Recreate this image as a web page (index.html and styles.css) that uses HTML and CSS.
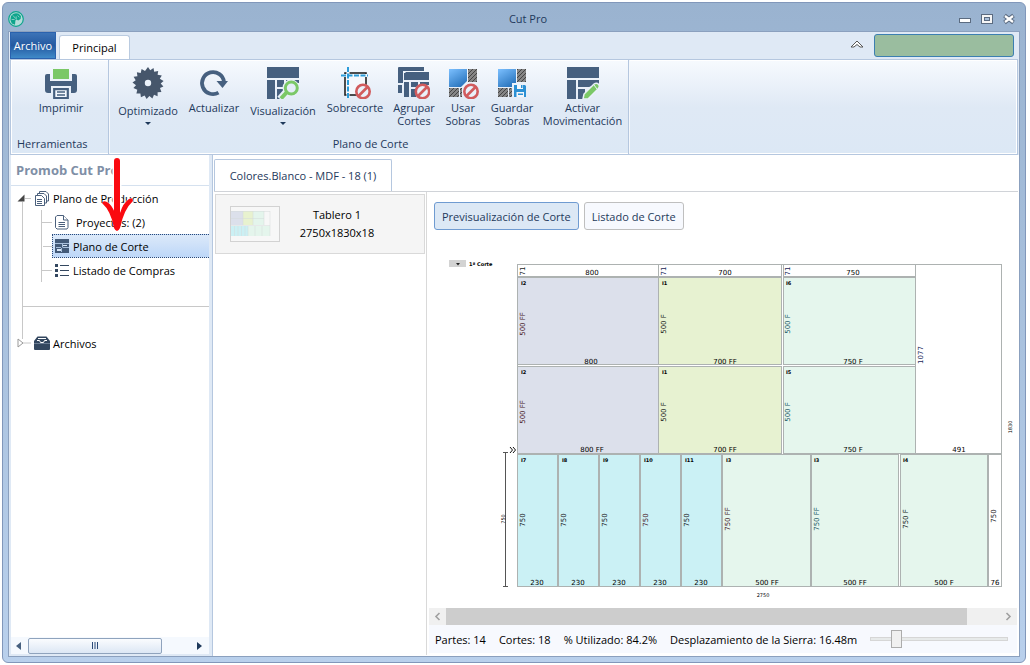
FILE: index.html
```
<!DOCTYPE html>
<html lang="es">
<head>
    <meta charset="UTF-8">
    <meta name="viewport" content="width=device-width, initial-scale=1.0">
    <title>Cut Pro</title>
    <link rel="stylesheet" href="styles.css">
</head>
<body>
    <div class="window">
        <header class="titlebar">
            <svg class="logo" width="16" height="16" viewBox="0 0 16 16">
                <circle cx="8" cy="8" r="7.3" fill="#b5dcda" stroke="#0fa58c" stroke-width="1.2"/>
                <path d="M8 2.2L10.5 2.6L13 5L12.6 8L10.2 9.4L8.6 8.4L7.4 9.6L7 13.8L3.8 12.4L2.4 9L3 5L5.4 2.8Z" fill="#0fa58c"/>
                <path d="M8.2 5.4v3M5 4.5l2.6 3M3.6 8.5h3M9.6 4.6l1.8 1.6" stroke="#b5dcda" stroke-width=".7" fill="none"/>
            </svg>
            <h1 class="title">Cut Pro</h1>
            <div class="window-buttons">
                <button type="button" aria-label="Minimizar">
                    <svg width="14" height="12" viewBox="0 0 14 12"><rect x="1.5" y="5.5" width="11" height="4" fill="#fff" stroke="#5b6b80"/></svg>
                </button>
                <button type="button" aria-label="Maximizar">
                    <svg width="14" height="12" viewBox="0 0 14 12"><rect x="1.5" y="1.5" width="11" height="9" fill="#f6f6f6" stroke="#5b6b80"/><rect x="4.500" y="4.500" width="5" height="3" fill="#a9bfda" stroke="#5b6b80"/></svg>
                </button>
                <button type="button" aria-label="Cerrar">
                    <svg width="14" height="12" viewBox="0 0 14 12"><path d="M2.500 2.500L11.500 9.500M11.500 2.500L2.500 9.500" stroke="#5b6b80" stroke-width="4.200"/><path d="M3 3L11 9M11 3L3 9" stroke="#fff" stroke-width="2.200"/></svg>
                </button>
            </div>
        </header>

        <div class="frame">
            <nav class="tabs">
                <button type="button" class="tab-file">Archivo</button>
                <button type="button" class="tab-main">Principal</button>
                <button type="button" class="collapse" aria-label="Contraer cinta">
                    <svg width="14" height="8" viewBox="0 0 14 8"><path d="M1 7L7 1L13 7H10L7 4.500L4 7Z" fill="#fff" stroke="#555" stroke-width="1"/></svg>
                </button>
                <input type="text" class="search" aria-label="Buscar">
            </nav>

            <div class="ribbon">
                <section class="group group-tools">
                    <div class="tools">
                        <button type="button" class="tool">
                            <svg width="32" height="32" viewBox="0 0 32 32">
                                <rect x="8" y="2" width="16" height="10" fill="#7bc867"/>
                                <path d="M0 9Q0 7 2 7H5V14H27V7H30Q32 7 32 9V23Q32 26 29 26H26V19H6V26H3Q0 26 0 23Z" fill="#46607f"/>
                                <path d="M9.200 22.200H22.800V31H9.200Z" fill="#f4f8fd" stroke="#46607f" stroke-width="2.200"/>
                                <path d="M12 25H20M12 28H20" stroke="#46607f" stroke-width="1.400"/>
                            </svg>
                            <span>Imprimir</span>
                        </button>
                    </div>
                    <h2>Herramientas</h2>
                </section>
                <section class="group group-plan">
                    <div class="tools">
                        <button type="button" class="tool tool-menu w-70">
                            <svg width="32" height="32" viewBox="0 0 32 32">
                                <path fill="#46566b" fill-rule="evenodd" d="M16 0L18.200 3.200L21.500 1L22.200 4.800L26.200 4L25.600 7.800L29.800 8.600L27.800 11.800L31.600 14L28.700 16.400L31.400 19.600L28 21L29.400 25L25.600 25.200L25.600 29.200L22 27.800L20.400 31.500L17.400 29L14.600 32L12.600 28.600L8.900 30.200L8.400 26.400L4.400 26.500L5.300 22.700L1.400 21L4 18.200L.5 15.500L3.700 13.300L1.600 9.800L5.400 9.200L4.900 5.200L8.700 6L9.600 2L13 3.900Z M16 12.800A3.200 3.200 0 1 0 16 19.200A3.200 3.200 0 1 0 16 12.800Z"/>
                            </svg>
                            <span>Optimizado</span>
                        </button>
                        <button type="button" class="tool w-62">
                            <svg width="32" height="32" viewBox="0 0 32 32">
                                <path d="M20.500 25.700A11 11 0 1 1 26 15" fill="none" stroke="#46607f" stroke-width="3.800"/>
                                <path d="M18.500 14H30L24.500 21Z" fill="#46607f"/>
                            </svg>
                            <span>Actualizar</span>
                        </button>
                        <button type="button" class="tool tool-menu w-76">
                            <svg width="32" height="32" viewBox="0 0 32 32">
                                <path d="M0 0H32V11H0ZM0 13H8V32H0ZM10 13H17V20H10ZM19 13H32V16H19ZM10 22H17V32H10Z" fill="#46607f"/>
                                <path d="M20 24L13 32" stroke="#e8f0fa" stroke-width="7"/>
                                <circle cx="24" cy="21" r="6" fill="#f1f6fc" stroke="#e8f0fa" stroke-width="5"/>
                                <path d="M20 25L14 31.500" stroke="#7bc867" stroke-width="4"/>
                                <circle cx="24.300" cy="21" r="6" fill="#e4edf8" stroke="#7bc867" stroke-width="3"/>
                            </svg>
                            <span>Visualización</span>
                        </button>
                        <button type="button" class="tool w-68">
                            <svg width="32" height="32" viewBox="0 0 32 32">
                                <rect x="6" y="6" width="21" height="22" fill="#f4f8fd" stroke="#222" stroke-width="1.600"/>
                                <path d="M9 0V31M2 8.500H29" fill="none" stroke="#f4f8fd" stroke-width="3"/>
                                <path d="M9 0V31M2 8.500H29" fill="none" stroke="#2b9bd8" stroke-width="2" stroke-dasharray="5 1.500"/>
                                <circle cx="24" cy="24.500" r="7.500" fill="#eaf1fa"/>
                                <g fill="none" stroke="#d15b5d" stroke-width="2.600"><circle cx="24" cy="24.500" r="6.700"/><path d="M28.500 20L19.500 29"/></g>
                            </svg>
                            <span>Sobrecorte</span>
                        </button>
                        <button type="button" class="tool w-50">
                            <svg width="32" height="32" viewBox="0 0 32 32">
                                <path d="M0 1Q0 0 1 0H26V4H5V16H0ZM0 18H4V26H0ZM6 6H7L8 5H31V13H6ZM6 15H11V30H6ZM13 15H20V20H13ZM22 15H31V18H22ZM13 22H18V30H13Z" fill="#46607f"/>
                                <circle cx="24.500" cy="24.500" r="7.500" fill="#eaf1fa"/>
                                <g fill="none" stroke="#d15b5d" stroke-width="2.600"><circle cx="24.500" cy="24.500" r="6.700"/><path d="M29 20L20 29"/></g>
                            </svg>
                            <span>Agrupar<br>Cortes</span>
                        </button>
                        <button type="button" class="tool w-48">
                            <svg width="32" height="32" viewBox="0 0 32 32">
                                <defs>
                                    <linearGradient id="board" x1="0" y1="0" x2=".6" y2="1"><stop offset="0" stop-color="#7cc0ff"/><stop offset="1" stop-color="#2b76bf"/></linearGradient>
                                    <pattern id="hatch" width="4" height="4" patternUnits="userSpaceOnUse"><rect width="4" height="4" fill="#858585"/><path d="M-1 1L1 -1M0 4L4 0M3 5L5 3" stroke="#444" stroke-width="1"/></pattern>
                                </defs>
                                <path d="M2 2H20V14L14 20H2Z" fill="url(#board)"/>
                                <path d="M21 2H30V15H21ZM2 21H12V30H2ZM13 21H15V30H13Z" fill="url(#hatch)"/>
                                <circle cx="24" cy="24.500" r="7.500" fill="#eaf1fa"/>
                                <g fill="none" stroke="#d15b5d" stroke-width="2.600"><circle cx="24" cy="24.500" r="6.700"/><path d="M28.500 20L19.500 29"/></g>
                            </svg>
                            <span>Usar<br>Sobras</span>
                        </button>
                        <button type="button" class="tool w-50">
                            <svg width="32" height="32" viewBox="0 0 32 32">
                                <path d="M2 2H20V16H16V20H2Z" fill="url(#board)"/>
                                <path d="M21 2H30V15H21ZM2 21H12V30H2ZM13 21H16V30H13Z" fill="url(#hatch)"/>
                                <path d="M18 18H29L30 19V30H18Z" fill="#2b90d4"/>
                                <path d="M21 18H27V22H21ZM20.500 25H28V30H20.500Z" fill="#f3f6fa"/>
                                <path d="M25 18H26.500V21H25ZM22 26.500H27V28H22Z" fill="#2b90d4"/>
                            </svg>
                            <span>Guardar<br>Sobras</span>
                        </button>
                        <button type="button" class="tool w-91">
                            <svg width="32" height="32" viewBox="0 0 32 32">
                                <path d="M0 0H32V11H0ZM0 13H9V32H0ZM11 13H32V17L22 20H11ZM11 22H18V32H11Z" fill="#46607f"/>
                                <path d="M16 32L17 27L27 17Q30 15 32 18Q33 20 31 22L21 32Z" fill="#7bc867" stroke="#eaf1fa" stroke-width="1.500"/>
                                <path d="M27 18L30 22" stroke="#eaf1fa" stroke-width="1"/>
                            </svg>
                            <span>Activar<br>Movimentación</span>
                        </button>
                    </div>
                    <h2>Plano de Corte</h2>
                </section>
            </div>

            <div class="workspace">
                <aside class="sidebar">
                    <h2 class="sidebar-title">Promob Cut Pro</h2>
                    <div class="tree">
                        <ul class="tree-root">
                            <li class="branch branch-open">
                                <div class="node">
                                    <svg class="toggle" width="14" height="10" viewBox="0 0 14 10"><path d="M8 5.500H14" stroke="#c8c8c8"/><path d="M7.500 1.500V8.500H.5Z" fill="#444"/></svg>
                                    <svg width="16" height="16" viewBox="0 0 16 16" fill="#fff" stroke="#4b607c">
                                        <path d="M5.500 3V1.500H12L14.500 4V11H12.500"/><path d="M3.500 5V3.500H10L12.500 6V13H10.500"/><path d="M1.500 5.500H7.500L10.500 8.500V15.500H1.500Z"/><path d="M3 9.500H8M3 11.500H8M3 13.500H8"/>
                                    </svg>
                                    <span>Plano de Producción</span>
                                </div>
                                <ul class="tree-sub">
                                    <li class="node node-wide">
                                        <svg width="16" height="16" viewBox="0 0 16 16" fill="#fff" stroke="#4b607c">
                                            <path d="M3 1.500H9.500L14 6V13.500L13 15H3L1.500 13.500V3Z"/><path d="M9.500 1.500V6H14M4.500 8.500H11M4.500 10.500H11M4.500 12.500H11"/>
                                        </svg>
                                        <span>Proyectos: (2)</span>
                                    </li>
                                    <li class="node node-selected">
                                        <svg width="16" height="16" viewBox="0 0 16 16">
                                            <path d="M1 1H15V15H1Z" fill="#435a78"/><path d="M1 5.500H15M8.500 6V9.500M9 9.500H15M2 9.500H7M7.500 10V14" fill="none" stroke="#a9c0dc"/><path d="M3 11H7V13H3ZM9 7H13V8H9Z" fill="#d8e6f7"/>
                                        </svg>
                                        <span>Plano de Corte</span>
                                    </li>
                                    <li class="node">
                                        <svg width="16" height="16" viewBox="0 0 16 16">
                                            <path d="M1 2H4V5H1ZM1 7H4V10H1ZM1 12H4V15H1Z" fill="#33475f"/><path d="M6 3.500H15M6 8.500H15M6 13.500H15" stroke="#33475f"/>
                                        </svg>
                                        <span>Listado de Compras</span>
                                    </li>
                                </ul>
                            </li>
                            <li class="tree-rule"></li>
                            <li class="branch branch-last">
                                <div class="node">
                                    <svg class="toggle" width="14" height="10" viewBox="0 0 14 10"><path d="M6 5H14" stroke="#c8c8c8"/><path d="M1 1L6 5L1 9Z" fill="#fff" stroke="#999"/></svg>
                                    <svg width="16" height="16" viewBox="0 0 16 16">
                                        <path d="M3.500 1.500H12.500L16 6V14Q16 15 15 15H1Q0 15 0 14V6Z" fill="#33475f"/><path d="M4 3.500H12M3 5.500H5.500L6.500 7.500H9.500L10.500 5.500H13" fill="none" stroke="#fff"/><path d="M0 8.500H16" stroke="#6b7d93"/>
                                    </svg>
                                    <span>Archivos</span>
                                </div>
                            </li>
                        </ul>
                    </div>
                    <div class="side-scroll">
                        <svg width="6" height="8" viewBox="0 0 6 8"><path d="M5 0V8L0 4Z" fill="#46607f"/></svg>
                        <div class="side-track"><div class="side-thumb"><svg width="6" height="7" viewBox="0 0 6 7"><path d="M.5 0V7M3 0V7M5.500 0V7" stroke="#2b4a78"/></svg></div></div>
                        <svg width="6" height="8" viewBox="0 0 6 8"><path d="M1 0V8L6 4Z" fill="#1e395b"/></svg>
                    </div>
                    <svg class="pointer" width="36" height="78" viewBox="0 0 36 78">
                        <path d="M17 5V62" fill="none" stroke="#fff" stroke-width="9" stroke-linecap="round"/>
                        <path d="M6 49L17 66L30 46" fill="none" stroke="#fff" stroke-width="7" stroke-linecap="round"/>
                        <path d="M17 5V64" stroke="#fa0a10" stroke-width="6" stroke-linecap="round"/>
                        <path d="M2 47Q3 44 7 46Q12 49 15 57H20Q23 47 29 43Q33 41 33 45Q24 53 20 72Q17 78 14 72Q11 55 2 47Z" fill="#fa0a10"/>
                    </svg>
                </aside>

                <main class="main">
                    <div class="doc-tabs">
                        <button type="button" class="doc-tab">Colores.Blanco - MDF - 18 (1)</button>
                    </div>
                    <div class="doc">
                        <div class="boards">
                            <button type="button" class="board">
                                <svg class="thumb" width="50" height="36" viewBox="0 0 50 36">
                                    <rect x=".5" y=".5" width="49" height="35" fill="#f7f7f7" stroke="#d2d2d2"/>
                                    <path d="M1 5H13V19H1Z" fill="#dce0eb"/><path d="M13 5H23V19H13Z" fill="#e8f2cf"/><path d="M23 5H34V19H23ZM18 20H40V30H18Z" fill="#e4f5ec"/><path d="M1 20H18V30H1Z" fill="#cbf0f4"/>
                                    <path d="M1 5.500H40M1 12.500H34M1 19.500H40M13 5V19M23 5V19M34 5V19M40 5V30M4.500 20V30M8 20V30M11.500 20V30M15 20V30M18 20V30M25 20V30M32 20V30" stroke="#d5dada" stroke-width=".5"/>
                                </svg>
                                <span>Tablero 1<br>2750x1830x18</span>
                            </button>
                        </div>
                        <div class="preview">
                            <div class="views">
                                <button type="button" class="view view-active">Previsualización de Corte</button>
                                <button type="button" class="view">Listado de Corte</button>
                            </div>
                            <div class="canvas">
                                <svg class="plan" viewBox="0 0 588 370">
                                    <!-- leyenda -->
                                    <rect x="20" y="24" width="17" height="7" fill="#d3d3d3"/>
                                    <path d="M27 27H31L29 29.500Z" fill="#222"/>
                                    <text class="small" x="40" y="30">1ª Corte</text>

                                    <!-- piezas -->
                                    <g class="cells">
                                        <rect class="c-empty" x="88.500" y="28.500" width="484" height="322"/>
                                        <rect class="c-empty" x="88.500" y="28.500" width="141" height="12"/>
                                        <rect class="c-empty" x="229.500" y="28.500" width="123" height="12"/>
                                        <rect class="c-empty" x="354.500" y="28.500" width="132" height="12"/>
                                        <rect class="c-gray" x="88.500" y="41.500" width="141" height="87"/>
                                        <rect class="c-lime" x="229.500" y="41.500" width="123" height="87"/>
                                        <rect class="c-mint" x="354.500" y="41.500" width="132" height="87"/>
                                        <rect class="c-gray" x="88.500" y="130.500" width="141" height="87"/>
                                        <rect class="c-lime" x="229.500" y="130.500" width="123" height="87"/>
                                        <rect class="c-mint" x="354.500" y="130.500" width="132" height="87"/>
                                        <rect class="c-empty" x="486.500" y="28.500" width="86" height="189"/>
                                        <rect class="c-cyan" x="88.500" y="218.500" width="40" height="132"/>
                                        <rect class="c-cyan" x="129.500" y="218.500" width="40" height="132"/>
                                        <rect class="c-cyan" x="170.500" y="218.500" width="40" height="132"/>
                                        <rect class="c-cyan" x="211.500" y="218.500" width="40" height="132"/>
                                        <rect class="c-cyan" x="252.500" y="218.500" width="40" height="132"/>
                                        <rect class="c-mint" x="293.500" y="218.500" width="88" height="132"/>
                                        <rect class="c-mint" x="382.500" y="218.500" width="87" height="132"/>
                                        <rect class="c-mint" x="471.500" y="218.500" width="87" height="132"/>
                                        <rect class="c-empty" x="559.500" y="218.500" width="13" height="132"/>
                                    </g>

                                    <!-- anchos -->
                                    <g class="size">
                                        <text x="163" y="39">800</text>
                                        <text x="296" y="39">700</text>
                                        <text x="424" y="39">750</text>
                                        <text x="162" y="128">800</text>
                                        <text x="296" y="128">700 FF</text>
                                        <text x="424" y="128">750 F</text>
                                        <text x="163" y="216">800 FF</text>
                                        <text x="296" y="216">700 FF</text>
                                        <text x="424" y="216">750 F</text>
                                        <text x="530" y="216">491</text>
                                        <text x="108" y="349">230</text>
                                        <text x="149" y="349">230</text>
                                        <text x="190" y="349">230</text>
                                        <text x="231" y="349">230</text>
                                        <text x="272" y="349">230</text>
                                        <text x="338" y="349">500 FF</text>
                                        <text x="426" y="349">500 FF</text>
                                        <text x="515" y="349">500 F</text>
                                        <text x="566" y="349">76</text>
                                    </g>

                                    <!-- altos -->
                                    <g class="size side">
                                        <text transform="translate(96 35) rotate(-90)">71</text>
                                        <text class="navy" transform="translate(237 35) rotate(-90)">71</text>
                                        <text class="navy" transform="translate(361 35) rotate(-90)">71</text>
                                        <text class="wine" transform="translate(96 88) rotate(-90)">500 FF</text>
                                        <text transform="translate(237 88) rotate(-90)">500 F</text>
                                        <text class="teal" transform="translate(361 88) rotate(-90)">500 F</text>
                                        <text class="wine" transform="translate(96 176) rotate(-90)">500 FF</text>
                                        <text transform="translate(237 176) rotate(-90)">500 F</text>
                                        <text class="teal" transform="translate(361 176) rotate(-90)">500 F</text>
                                        <text class="navy" transform="translate(494 119) rotate(-90)">1077</text>
                                        <text transform="translate(96 284) rotate(-90)">750</text>
                                        <text transform="translate(137 284) rotate(-90)">750</text>
                                        <text transform="translate(178 284) rotate(-90)">750</text>
                                        <text class="wine" transform="translate(219 284) rotate(-90)">750</text>
                                        <text transform="translate(260 284) rotate(-90)">750</text>
                                        <text class="wine" transform="translate(301 283) rotate(-90)">750 FF</text>
                                        <text class="teal" transform="translate(390 283) rotate(-90)">750 FF</text>
                                        <text transform="translate(479 283) rotate(-90)">750 F</text>
                                        <text transform="translate(567 280) rotate(-90)">750</text>
                                    </g>

                                    <!-- etiquetas -->
                                    <g class="small">
                                        <text x="92" y="49">I2</text>
                                        <text x="233" y="49">I1</text>
                                        <text x="357" y="49">I6</text>
                                        <text x="92" y="138">I2</text>
                                        <text x="233" y="138">I1</text>
                                        <text x="357" y="138">I5</text>
                                        <text x="92" y="226">I7</text>
                                        <text x="133" y="226">I8</text>
                                        <text x="174" y="226">I9</text>
                                        <text x="215" y="226">I10</text>
                                        <text x="256" y="226">I11</text>
                                        <text x="297" y="226">I3</text>
                                        <text x="385" y="226">I3</text>
                                        <text x="474" y="226">I4</text>
                                    </g>

                                    <!-- cotas -->
                                    <path d="M76.500 217V350M74 216.500H79M74 350.500H79" stroke="#555"/>
                                    <path d="M81 211L83.500 214L81 217M84 211L86.500 214L84 217" fill="none" stroke="#111"/>
                                    <text class="small mid" transform="translate(76 283) rotate(-90)">750</text>
                                    <text class="small mid" transform="translate(583 191) rotate(-90)">1830</text>
                                    <text class="small mid" x="334" y="361">2750</text>
                                </svg>
                            </div>
                            <div class="hscroll">
                                <svg width="17" height="17" viewBox="0 0 17 17"><path d="M10.500 5L7 8.500L10.500 12" fill="none" stroke="#a0a0a0" stroke-width="1.600"/></svg>
                                <div class="hscroll-track"><div class="hscroll-thumb"></div></div>
                                <svg width="17" height="17" viewBox="0 0 17 17"><path d="M6.500 5L10 8.500L6.500 12" fill="none" stroke="#a0a0a0" stroke-width="1.600"/></svg>
                            </div>
                            <footer class="status">
                                <span>Partes: 14</span>
                                <span>Cortes: 18</span>
                                <span>% Utilizado: 84.2%</span>
                                <label for="zoom">Desplazamiento de la Sierra: 16.48m</label>
                                <input type="range" id="zoom" class="zoom" min="0" max="100" value="16">
                            </footer>
                        </div>
                    </div>
                </main>
            </div>
        </div>
    </div>
</body>
</html>
```

FILE: styles.css
```
* {
    box-sizing: border-box;
}
body {
    display: flex;
    margin: 0;
    padding: 2px 4px 2px 2px;
    min-height: 100vh;
    background-color: #FFFFFF;
    font-family: "Open Sans", "Noto Sans", sans-serif;
    font-size: 11px;
    color: #000000;
}
button {
    margin: 0;
    padding: 0;
    border: none;
    background: none;
    font: inherit;
    color: inherit;
    white-space: nowrap;
}
h1, h2, ul {
    margin: 0;
    padding: 0;
    font-size: 11px;
    font-weight: normal;
    list-style: none;
}
svg {
    display: block;
    flex: none;
}

/* ventana */
.window {
    flex: 1;
    display: flex;
    flex-direction: column;
    min-width: 0;
    padding: 0 5px 5px;
    border: 1px solid #8197BA;
    border-radius: 6px;
    background: linear-gradient(#9AB3D0, #B9D0EC);
}
.titlebar {
    display: flex;
    align-items: center;
    height: 28px;
    padding-top: 3px;
}
.title {
    flex: 1;
    padding-left: 74px;
    text-align: center;
    font-size: 11px;
    color: #1E395B;
}
.window-buttons {
    display: flex;
    gap: 8px;
    padding-right: 4px;
}
.frame {
    flex: 1;
    display: flex;
    flex-direction: column;
    border: 1px solid #8BA0BE;
    background-color: #DFE9F5;
}

/* cinta */
.tabs {
    display: flex;
    align-items: flex-end;
    height: 27px;
    padding: 0 5px 0 1px;
}
.tab-file {
    width: 46px;
    height: 27px;
    margin-right: 3px;
    border: 1px solid #2A62AE;
    background: linear-gradient(#3C73B7, #2459A0 50%, #3F8AC8);
    color: #FFFFFF;
}
.tab-main {
    width: 71px;
    height: 24px;
    border: 1px solid #BACBE0;
    border-bottom: none;
    border-radius: 3px 3px 0 0;
    background-color: #FFFFFF;
}
.collapse {
    margin: 0 10px 11px auto;
}
.search {
    width: 140px;
    height: 23px;
    margin-bottom: 2px;
    border: 1px solid #3C7FB1;
    border-radius: 3px;
    background-color: #9ABD9F;
}
.ribbon {
    display: flex;
    height: 96px;
    margin: 0 1px;
    border: 1px solid #B5C7DF;
    background: linear-gradient(#F7FAFE, #DFE9F5 50%, #DCE8F5);
    box-shadow: inset 0 0 0 1px #FFFFFF;
    color: #1E395B;
}
.group {
    display: flex;
    flex-direction: column;
    justify-content: space-between;
    padding-top: 7px;
    border-right: 1px solid #B5C7DF;
    box-shadow: 1px 0 #F5F8FC;
}
.group h2 {
    line-height: 20px;
    text-align: center;
}
.group-tools {
    width: 98px;
}
.group-tools .tools {
    padding-left: 34px;
}
.group-tools h2 {
    padding-left: 6px;
    text-align: left;
}
.group-tools .tool {
    width: 32px;
}
.group-plan {
    padding-left: 4px;
}
.tools {
    display: flex;
    align-items: flex-start;
}
.tool {
    display: flex;
    flex-direction: column;
    align-items: center;
    line-height: 13px;
}
.tool span {
    margin-top: 2px;
}
.tool-menu span {
    margin-top: 5px;
}
.tool-menu::after {
    content: "";
    margin-top: 5px;
    border: 3px solid transparent;
    border-top-color: #1E395B;
}
.w-48 { width: 48px; }
.w-50 { width: 50px; }
.w-62 { width: 62px; }
.w-68 { width: 68px; }
.w-70 { width: 70px; }
.w-76 { width: 76px; }
.w-91 { width: 91px; }

/* panel izquierdo */
.workspace {
    flex: 1;
    display: flex;
}
.sidebar {
    position: relative;
    display: flex;
    flex-direction: column;
    width: 198px;
    margin: 0 3px 2px 2px;
    background-color: #FFFFFF;
}
.sidebar-title {
    padding-left: 5px;
    line-height: 30px;
    font-size: 13px;
    font-weight: bold;
    color: #7F8FA6;
    border-bottom: 1px solid #D5E1EF;
}
.tree {
    flex: 1;
}
.branch > .node {
    gap: 3px;
    padding-left: 6px;
}
.branch-open, .tree-rule, .branch-last {
    background: linear-gradient(#C8C8C8, #C8C8C8) 11px 16px / 1px 100% no-repeat;
}
.node {
    display: flex;
    align-items: center;
    gap: 3px;
    height: 24px;
    white-space: nowrap;
}
.tree-sub {
    margin-left: 30px;
    padding-bottom: 24px;
    background: linear-gradient(#C8C8C8, #C8C8C8) 0 0 / 1px 72px no-repeat;
}
.tree-sub .node {
    margin-left: 11px;
    padding-left: 2px;
    position: relative;
}
.tree-sub .node::before {
    content: "";
    position: absolute;
    left: -10px;
    width: 10px;
    height: 1px;
    background-color: #C8C8C8;
}
.tree-sub .node-wide {
    gap: 6px;
}
.tree-sub .node-selected {
    border: 1px dotted #2B4A78;
    border-right: none;
    padding-left: 1px;
    background: linear-gradient(#DCE9F9, #BDD7F8);
}
.tree-rule {
    height: 25px;
    margin-left: 11px;
    border-top: 1px solid #C8C8C8;
    background-position: 0 0;
}
.branch-last {
    background-position: 11px 0;
    background-size: 1px 8px;
}
.side-scroll {
    display: flex;
    align-items: center;
    height: 17px;
    padding: 0 7px 0 5px;
    background-color: #F5F9FE;
}
.side-track {
    flex: 1;
    padding: 0 34px 0 6px;
}
.side-thumb {
    display: flex;
    justify-content: center;
    align-items: center;
    height: 16px;
    border: 1px solid #8FA3BD;
    border-radius: 2px;
    background: linear-gradient(#FAFCFE, #DCE7F4);
}
.pointer {
    position: absolute;
    left: 89px;
    top: 1px;
}

/* documento */
.main {
    flex: 1;
    display: flex;
    flex-direction: column;
    min-width: 0;
    padding: 4px 1px 1px;
    border-left: 1px solid #B5C7DF;
    background-color: #FFFFFF;
}
.doc-tabs {
    display: flex;
}
.doc-tab {
    width: 178px;
    height: 32px;
    border: 1px solid #B5C7DF;
    border-bottom: none;
    border-radius: 2px 2px 0 0;
    color: #1E395B;
}
.doc {
    flex: 1;
    display: flex;
    border-top: 1px solid #D0D3D8;
}
.boards {
    width: 213px;
    padding: 2px 1px;
    border-right: 1px solid #D9D9D9;
}
.board {
    display: flex;
    align-items: center;
    width: 100%;
    height: 60px;
    padding-left: 14px;
    border: 1px solid #D9D9D9;
    background-color: #F5F5F5;
    line-height: 18px;
}
.board span {
    flex: 1;
    padding-right: 30px;
}
.preview {
    flex: 1;
    display: flex;
    flex-direction: column;
    min-width: 0;
    padding: 10px 1px 2px 2px;
}
.views {
    display: flex;
    gap: 5px;
    padding-left: 5px;
}
.view {
    height: 28px;
    padding: 0 7px;
    border: 1px solid #BFBFBF;
    border-radius: 3px;
    background-color: #F7F9FE;
    color: #1E395B;
}
.view-active {
    border-color: #6F9BD1;
    background-color: #DCE8F5;
}
.canvas {
    flex: 1;
    padding-top: 6px;
}
.plan {
    width: 100%;
    font-family: "DejaVu Sans", sans-serif;
}
.cells rect {
    stroke: #ADB2B1;
}
.c-empty { fill: #FFFFFF; }
.c-gray { fill: #DCE0EB; }
.c-lime { fill: #E7F2D1; }
.c-mint { fill: #E5F6ED; }
.c-cyan { fill: #CBF1F5; }
.size {
    font-size: 7px;
    text-anchor: middle;
}
.side { fill: #1A1A1A; }
.size .wine { fill: #4A1828; }
.size .teal { fill: #1F5866; }
.size .navy { fill: #1A2556; }
.small {
    font-size: 5px;
    font-weight: bold;
}
.mid {
    font-weight: normal;
    text-anchor: middle;
}
.hscroll {
    display: flex;
    height: 17px;
    background-color: #F0F0F0;
}
.hscroll-track {
    flex: 1;
}
.hscroll-thumb {
    width: 94%;
    height: 17px;
    background-color: #CDCDCD;
}
.status {
    display: flex;
    align-items: center;
    gap: 13px;
    height: 28px;
    padding: 0 9px 0 6px;
    background-color: #F7F9FE;
    white-space: nowrap;
}
.zoom {
    appearance: none;
    flex: 1;
    min-width: 0;
    height: 20px;
    margin: 0;
    background: none;
}
.zoom::-webkit-slider-runnable-track {
    height: 4px;
    border: 1px solid #D6D6D6;
    background-color: #E7EAEA;
}
.zoom::-webkit-slider-thumb {
    appearance: none;
    width: 11px;
    height: 18px;
    margin-top: -8px;
    border: 1px solid #ACACAC;
    background-color: #F0F0F0;
}
```
